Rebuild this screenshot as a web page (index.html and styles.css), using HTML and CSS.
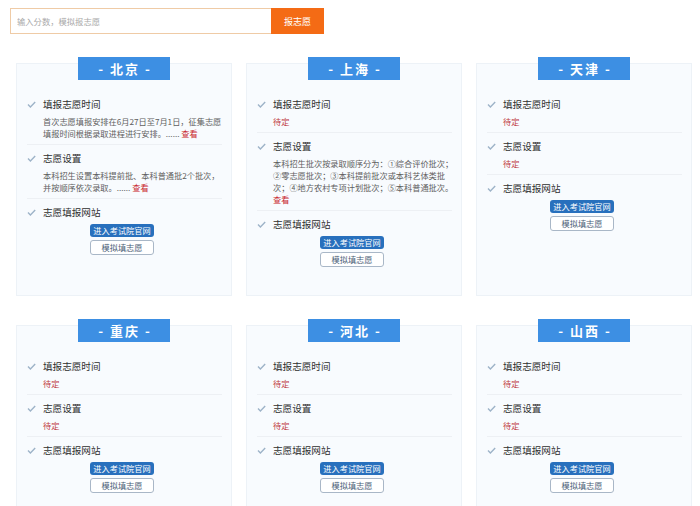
FILE: index.html
```html
<!DOCTYPE html>
<html lang="zh-CN">
<head>
    <meta charset="UTF-8">
    <meta name="viewport" content="width=device-width, initial-scale=1.0">
    <title>模拟报志愿</title>
    <link rel="stylesheet" href="styles.css">
</head>
<body>
    <div class="search">
        <input type="text" class="search-input" placeholder="输入分数，模拟报志愿">
        <button class="search-btn">报志愿</button>
    </div>

    <div class="grid">
        <!-- 北京 -->
        <div class="card">
            <div class="card-title">- 北京 -</div>
            <ul class="steps">
                <li class="step">
                    <svg class="tick" viewBox="0 0 9 7"><path d="M1 3.6 3.4 6 8.2 1"/></svg>
                    <h3>填报志愿时间</h3>
                    <p>首次志愿填报安排在6月27日至7月1日，征集志愿<br>填报时间根据录取进程进行安排。...... <a href="#">查看</a></p>
                </li>
                <li class="step">
                    <svg class="tick" viewBox="0 0 9 7"><path d="M1 3.6 3.4 6 8.2 1"/></svg>
                    <h3>志愿设置</h3>
                    <p>本科招生设置本科提前批、本科普通批2个批次，<br>并按顺序依次录取。...... <a href="#">查看</a></p>
                </li>
                <li class="step">
                    <svg class="tick" viewBox="0 0 9 7"><path d="M1 3.6 3.4 6 8.2 1"/></svg>
                    <h3>志愿填报网站</h3>
                    <div class="links">
                        <a href="#" class="btn-site">进入考试院官网</a>
                        <a href="#" class="btn-sim">模拟填志愿</a>
                    </div>
                </li>
            </ul>
        </div>

        <!-- 上海 -->
        <div class="card">
            <div class="card-title">- 上海 -</div>
            <ul class="steps">
                <li class="step">
                    <svg class="tick" viewBox="0 0 9 7"><path d="M1 3.6 3.4 6 8.2 1"/></svg>
                    <h3>填报志愿时间</h3>
                    <p class="pending">待定</p>
                </li>
                <li class="step">
                    <svg class="tick" viewBox="0 0 9 7"><path d="M1 3.6 3.4 6 8.2 1"/></svg>
                    <h3>志愿设置</h3>
                    <p>本科招生批次按录取顺序分为：①综合评价批次；<br>②零志愿批次；③本科提前批次或本科艺体类批<br>次；④地方农村专项计划批次；⑤本科普通批次。<br><a href="#">查看</a></p>
                </li>
                <li class="step">
                    <svg class="tick" viewBox="0 0 9 7"><path d="M1 3.6 3.4 6 8.2 1"/></svg>
                    <h3>志愿填报网站</h3>
                    <div class="links">
                        <a href="#" class="btn-site">进入考试院官网</a>
                        <a href="#" class="btn-sim">模拟填志愿</a>
                    </div>
                </li>
            </ul>
        </div>

        <!-- 天津 -->
        <div class="card">
            <div class="card-title">- 天津 -</div>
            <ul class="steps">
                <li class="step">
                    <svg class="tick" viewBox="0 0 9 7"><path d="M1 3.6 3.4 6 8.2 1"/></svg>
                    <h3>填报志愿时间</h3>
                    <p class="pending">待定</p>
                </li>
                <li class="step">
                    <svg class="tick" viewBox="0 0 9 7"><path d="M1 3.6 3.4 6 8.2 1"/></svg>
                    <h3>志愿设置</h3>
                    <p class="pending">待定</p>
                </li>
                <li class="step">
                    <svg class="tick" viewBox="0 0 9 7"><path d="M1 3.6 3.4 6 8.2 1"/></svg>
                    <h3>志愿填报网站</h3>
                    <div class="links">
                        <a href="#" class="btn-site">进入考试院官网</a>
                        <a href="#" class="btn-sim">模拟填志愿</a>
                    </div>
                </li>
            </ul>
        </div>

        <!-- 重庆 -->
        <div class="card">
            <div class="card-title">- 重庆 -</div>
            <ul class="steps">
                <li class="step">
                    <svg class="tick" viewBox="0 0 9 7"><path d="M1 3.6 3.4 6 8.2 1"/></svg>
                    <h3>填报志愿时间</h3>
                    <p class="pending">待定</p>
                </li>
                <li class="step">
                    <svg class="tick" viewBox="0 0 9 7"><path d="M1 3.6 3.4 6 8.2 1"/></svg>
                    <h3>志愿设置</h3>
                    <p class="pending">待定</p>
                </li>
                <li class="step">
                    <svg class="tick" viewBox="0 0 9 7"><path d="M1 3.6 3.4 6 8.2 1"/></svg>
                    <h3>志愿填报网站</h3>
                    <div class="links">
                        <a href="#" class="btn-site">进入考试院官网</a>
                        <a href="#" class="btn-sim">模拟填志愿</a>
                    </div>
                </li>
            </ul>
        </div>

        <!-- 河北 -->
        <div class="card">
            <div class="card-title">- 河北 -</div>
            <ul class="steps">
                <li class="step">
                    <svg class="tick" viewBox="0 0 9 7"><path d="M1 3.6 3.4 6 8.2 1"/></svg>
                    <h3>填报志愿时间</h3>
                    <p class="pending">待定</p>
                </li>
                <li class="step">
                    <svg class="tick" viewBox="0 0 9 7"><path d="M1 3.6 3.4 6 8.2 1"/></svg>
                    <h3>志愿设置</h3>
                    <p class="pending">待定</p>
                </li>
                <li class="step">
                    <svg class="tick" viewBox="0 0 9 7"><path d="M1 3.6 3.4 6 8.2 1"/></svg>
                    <h3>志愿填报网站</h3>
                    <div class="links">
                        <a href="#" class="btn-site">进入考试院官网</a>
                        <a href="#" class="btn-sim">模拟填志愿</a>
                    </div>
                </li>
            </ul>
        </div>

        <!-- 山西 -->
        <div class="card">
            <div class="card-title">- 山西 -</div>
            <ul class="steps">
                <li class="step">
                    <svg class="tick" viewBox="0 0 9 7"><path d="M1 3.6 3.4 6 8.2 1"/></svg>
                    <h3>填报志愿时间</h3>
                    <p class="pending">待定</p>
                </li>
                <li class="step">
                    <svg class="tick" viewBox="0 0 9 7"><path d="M1 3.6 3.4 6 8.2 1"/></svg>
                    <h3>志愿设置</h3>
                    <p class="pending">待定</p>
                </li>
                <li class="step">
                    <svg class="tick" viewBox="0 0 9 7"><path d="M1 3.6 3.4 6 8.2 1"/></svg>
                    <h3>志愿填报网站</h3>
                    <div class="links">
                        <a href="#" class="btn-site">进入考试院官网</a>
                        <a href="#" class="btn-sim">模拟填志愿</a>
                    </div>
                </li>
            </ul>
        </div>
    </div>
</body>
</html>
```

FILE: styles.css
```css
body {
    margin: 0;
    padding: 0;
    background-color: #fff;
    font-family: "Noto Sans CJK SC", "Microsoft YaHei", sans-serif;
    color: #333;
}
.search {
    display: flex;
    margin: 8px 0 0 10px;
    height: 26px;
}
.search-input {
    width: 261px;
    height: 26px;
    box-sizing: border-box;
    border: 1px solid #efcba6;
    border-right: none;
    padding: 0 6px;
    font-family: inherit;
    font-size: 8.3px;
    outline: none;
}
.search-input::placeholder {
    color: #a9a9a9;
}
.search-btn {
    width: 53px;
    height: 26px;
    border: none;
    background-color: #f46b15;
    color: #fff;
    font-family: inherit;
    font-size: 9px;
    padding: 0;
    cursor: pointer;
}
.grid {
    display: grid;
    grid-template-columns: repeat(3, 216px);
    column-gap: 14px;
    row-gap: 29px;
    margin: 29px 0 0 16px;
}
.card {
    height: 233px;
    box-sizing: border-box;
    background-color: #f8fbfe;
    border: 1px solid #edf2f7;
}
.card-title {
    width: 92px;
    height: 23px;
    margin: -7px auto 0;
    padding-left: 2px;
    box-sizing: border-box;
    background-color: #3d8fe3;
    color: #fff;
    font-size: 13px;
    font-weight: bold;
    line-height: 23px;
    letter-spacing: 2px;
    text-align: center;
}
.steps {
    list-style: none;
    margin: 11px 9px 0 10px;
    padding: 0;
}
.step {
    display: grid;
    grid-template-columns: 16px 1fr;
    padding: 6px 0 5px;
    border-bottom: 1px solid #edf0f4;
}
.step:last-child {
    border-bottom: none;
}
.tick {
    grid-column: 1;
    grid-row: 1;
    align-self: center;
    width: 9px;
    height: 7px;
    margin-top: 1px;
    fill: none;
    stroke: #9db3c8;
    stroke-width: 1.4;
}
.step h3 {
    grid-column: 2;
    grid-row: 1;
    margin: 0;
    font-size: 9.6px;
    font-weight: normal;
    line-height: 14px;
    color: #2f2f2f;
}
.step p {
    grid-column: 2;
    margin: 4px 0 0;
    font-size: 8.2px;
    line-height: 12px;
    color: #606060;
    white-space: nowrap;
}
.step p a {
    color: #c9282f;
    text-decoration: none;
}
.step p.pending {
    color: #bf3a3f;
}
.links {
    grid-column: 1 / -1;
    display: flex;
    flex-direction: column;
    align-items: center;
    gap: 3px;
    margin-top: 5px;
    padding-right: 5px;
}
.links a {
    display: block;
    width: 64px;
    box-sizing: border-box;
    border-radius: 3px;
    font-size: 8.2px;
    text-align: center;
    text-decoration: none;
}
.btn-site {
    height: 13px;
    line-height: 13px;
    background-color: #2870bd;
    color: #fff;
}
.btn-sim {
    height: 15px;
    line-height: 13px;
    border: 1px solid #a9b7c7;
    background-color: #fff;
    color: #4a5e76;
}
```
